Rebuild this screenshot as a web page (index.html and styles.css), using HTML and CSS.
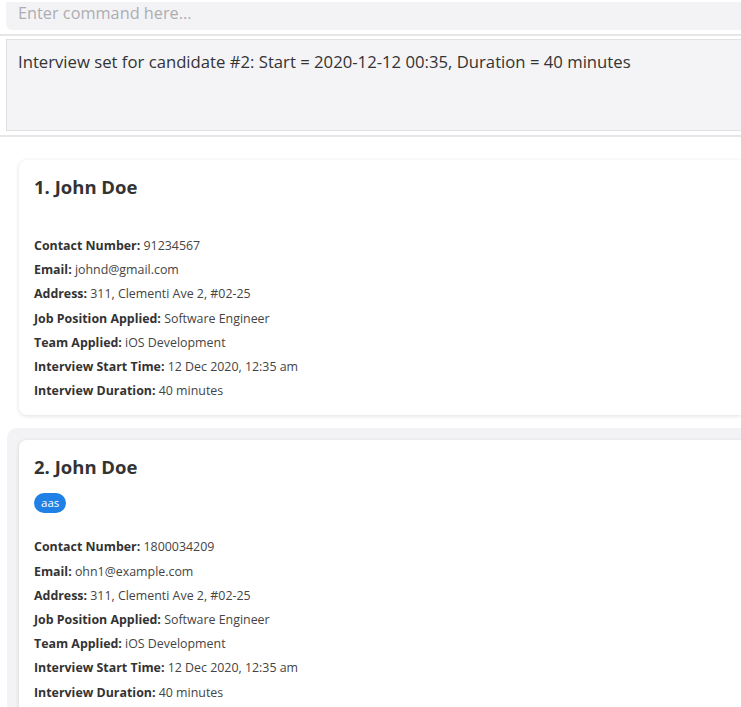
FILE: index.html
```html
<!DOCTYPE html>
<html>
<head>
<meta charset="utf-8">
<link rel="stylesheet" href="styles.css">
</head>
<body>
<div class="command-bar">
  <input class="command-input" type="text" placeholder="Enter command here...">
</div>
<div class="divider"></div>
<div class="result-box">Interview set for candidate #2: Start = 2020-12-12 00:35, Duration = 40 minutes</div>
<div class="divider"></div>
<div class="list">
  <div class="cell">
    <div class="card">
      <div class="name">1. John Doe</div>
      <div class="tags"></div>
      <div class="field"><b>Contact Number:</b> 91234567</div>
      <div class="field"><b>Email:</b> johnd@gmail.com</div>
      <div class="field"><b>Address:</b> 311, Clementi Ave 2, #02-25</div>
      <div class="field"><b>Job Position Applied:</b> Software Engineer</div>
      <div class="field"><b>Team Applied:</b> iOS Development</div>
      <div class="field"><b>Interview Start Time:</b> 12 Dec 2020, 12:35 am</div>
      <div class="field"><b>Interview Duration:</b> 40 minutes</div>
    </div>
  </div>
  <div class="cell selected">
    <div class="card">
      <div class="name">2. John Doe</div>
      <div class="tags"><span class="tag">aas</span></div>
      <div class="field"><b>Contact Number:</b> 1800034209</div>
      <div class="field"><b>Email:</b> ohn1@example.com</div>
      <div class="field"><b>Address:</b> 311, Clementi Ave 2, #02-25</div>
      <div class="field"><b>Job Position Applied:</b> Software Engineer</div>
      <div class="field"><b>Team Applied:</b> iOS Development</div>
      <div class="field"><b>Interview Start Time:</b> 12 Dec 2020, 12:35 am</div>
      <div class="field"><b>Interview Duration:</b> 40 minutes</div>
    </div>
  </div>
</div>
</body>
</html>
```
FILE: styles.css
```css
* { box-sizing: border-box; }
html, body { margin: 0; padding: 0; background: #ffffff; overflow: hidden; }
body { font-family: "Open Sans", "Noto Sans", sans-serif; color: #333; }

.command-bar { padding: 2px 0 0 6px; }
.command-input {
  display: block;
  width: 100%;
  height: 28px;
  border: none;
  outline: none;
  background: #f3f3f6;
  border-radius: 0 0 0 6px;
  padding: 0 12px 6px;
  font-family: inherit;
  font-size: 16.3px;
  color: #333;
}
.command-input::placeholder { color: #adadb2; }

.divider {
  height: 2px;
  margin-top: 4px;
  background: #e6e6e8;
}

.result-box {
  margin: 3px 0 0 6px;
  height: 92px;
  background: #f4f4f6;
  border: 1px solid #e1e1e3;
  border-right: none;
  padding: 9px 11px;
  font-size: 16.7px;
  line-height: 26px;
  color: #333;
}

.list { padding-top: 23px; }

.cell { padding-left: 19px; }
.cell.selected {
  margin: 13px 0 0 7px;
  padding: 12px 0 0 12px;
  background: #f3f3f5;
  border-radius: 10px 0 0 0;
}

.card {
  background: #ffffff;
  border-radius: 8px 0 0 8px;
  box-shadow: 0 1px 4px rgba(0, 0, 0, 0.13);
  padding: 14px 15px 12px 15px;
}

.name {
  font-size: 18.5px;
  font-weight: 700;
  line-height: 26px;
  color: #333;
}

.tags { margin: 13px 0 21px; display: flex; gap: 6px; }
.tag {
  display: inline-block;
  height: 20px;
  line-height: 20px;
  padding: 0 7px;
  margin-bottom: 1px;
  border-radius: 10px;
  background: #1f80e6;
  color: #ffffff;
  font-size: 11.5px;
}

.field {
  font-size: 12.4px;
  line-height: 24.2px;
  color: #444;
}
.field b { color: #333; font-weight: 700; }
```
